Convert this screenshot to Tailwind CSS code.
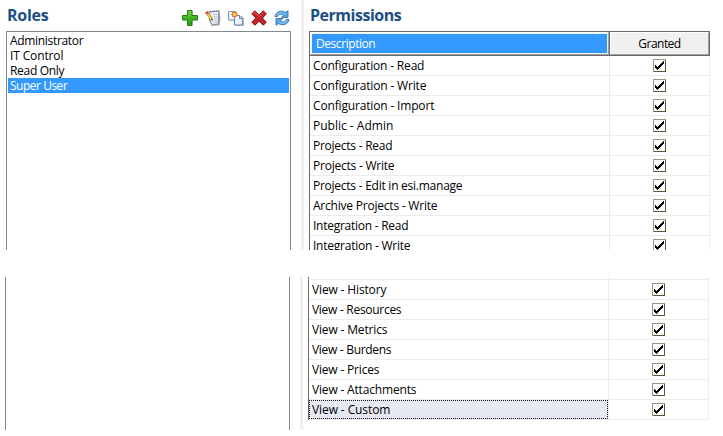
<!DOCTYPE html>
<html lang="en">
<head>
<meta charset="utf-8">
<title>Roles and Permissions</title>
<script src="https://cdn.jsdelivr.net/npm/@tailwindcss/browser@4"></script>
</head>
<body class="w-[723px] h-[436px] overflow-hidden bg-white text-black text-[12px] leading-[15px] font-['Open_Sans','Noto_Sans',sans-serif]">
<svg class="hidden">
  <symbol id="check" viewBox="0 0 13 13">
    <path fill="#fff" d="M0 0h13v13H0z"/>
    <path fill="#949b7c" d="M0 0h13v1H1v12H0z"/>
    <path fill="#555a38" d="M12 1h1v12H1v-1h11z"/>
    <path fill="#000" d="M2 6h1v3h-1zM3 7h1v3h-1zM4 8h1v3h-1zM5 7h1v3h-1zM6 6h1v3h-1zM7 5h1v3h-1zM8 4h1v3h-1zM9 3h1v3h-1zM10 2h1v3h-1z"/>
  </symbol>
</svg>

<section class="flex h-[250px] overflow-hidden">
  <div class="w-[301px] pl-[6px] shrink-0">
    <div class="flex h-[31px] justify-between pr-[11px]">
      <h2 class="pl-px pt-[4px] text-[16px] leading-[22px] font-bold text-[#1b4f83]"><span class="inline-block whitespace-nowrap" data-w="41">Roles</span></h2>
      <div class="flex gap-[7px] pt-[10px]">
        <svg class="size-4" viewBox="0 0 16 16"><defs><linearGradient id="g" x2="0" y2="1"><stop stop-color="#7fd650"/><stop offset=".5" stop-color="#3fb322"/><stop offset="1" stop-color="#249e11"/></linearGradient></defs><path d="M6 1h5v5h4.500v4.500H11v5H6v-5H1V6h5z" fill="#bbb" opacity=".6"/><path d="M5.500.5h4.500v5h5.500v4.500H10v5.500H5.500V10H.5V5.500h5z" fill="url(#g)" stroke="#227d16"/></svg>
        <svg class="size-4" viewBox="0 0 16 16"><path d="m4 2 10.500-.8 1 7-1.200 7.200-7.600.3L4 10z" fill="#777" opacity=".7"/><path d="m4 1.800 10-.8q-1 4.500-.4 8.500l-.2 4.500-6.400 1-2.500-6z" fill="#e9eef6" stroke="#7d8794" stroke-width=".9"/><path d="M8 4.500h4.500M9 6.500h3.500M9 8.500h3.500M9.500 10.500h3M8.500 12.500h4" stroke="#a9b7ca" stroke-width=".7"/><path d="m5 1.600 9-.7" stroke="#66707c" stroke-width="1.400" stroke-dasharray="1 1"/><path d="m2.300 3.200 4.200 6" stroke="#a0701c" stroke-width="3"/><path d="m2.300 3.200 4.200 6" stroke="#ffcf4a" stroke-width="1.800"/><path d="m1.300 1.800 1.200 1.700" stroke="#d0392b" stroke-width="3"/><path d="m5.700 9.500 2 1.500-.1-2.600z" fill="#3b342b"/></svg>
        <svg class="size-4" viewBox="0 0 16 16"><path d="M2 2h7v9H2zM8 6h6l2 2v8H8z" fill="#aaa" opacity=".7"/><path d="M.5 1.500h7v8.500h-7z" fill="#eef4fc" stroke="#7d98bd"/><path d="M6.500 5.500h5l3 3v6.500h-8z" fill="#edf4fd" stroke="#6484b1"/><path d="M11.500 5.500v3h3" fill="#d6e4f5" stroke="#6484b1"/><circle cx="6.500" cy="4.500" r="2.700" fill="#ff8c47"/><path d="m6.500 1 .9 1.500 1.700-.6-.6 1.700 1.500.9-1.500.9.6 1.700-1.700-.6-.9 1.500-.9-1.500-1.700.6.6-1.700L3 4.500l1.500-.9-.6-1.700 1.700.6z" fill="#f0703a"/><circle cx="6.500" cy="4.500" r="1.600" fill="#ffe553"/></svg>
        <svg class="size-4" viewBox="0 0 16 16"><path d="m5 1 4 4 4-4 3 3-4 4.500 4 4-3 3-4-4-4 4-3.500-3 4-4-4-4z" fill="#999" opacity=".5"/><path d="M3.800.8 8 5 12.200.8l3 3L11.300 8l3.900 4.200-3 3L8 11l-4.200 4.200-3-3L4.800 8 .8 3.800z" fill="#c62328" stroke="#861315"/><path d="m2.200 3.500 1.600-1.300L8 6.300l4.200-4" stroke="#e0605c" fill="none"/></svg>
        <svg class="size-4" viewBox="0 0 16 16"><path d="M1 6.500C1.500 2 7.500-.5 11.500 2.500L14 .8v6.700H7.500L9.600 5C7 3.300 4.500 4.200 3.500 6.500z" fill="#5aa9ec" stroke="#2468b0" stroke-width=".8"/><path d="M15 9.500c-.5 4.500-6.500 7-10.500 4L2 15.200V8.500h6.500L6.400 11c2.600 1.700 5.100.8 6.100-1.500z" fill="#5aa9ec" stroke="#2468b0" stroke-width=".8"/><path d="M2.500 5.500Q6 .7 11 3.800M13.500 10.500Q10 15.300 5 12.200" fill="none" stroke="#a5d5fa" stroke-width=".8"/></svg>
      </div>
    </div>
    <ul class="w-[285px] h-[240px] border border-[#828790] p-px">
      <li class="h-[15px] pl-[2px]"><span class="inline-block whitespace-nowrap" data-w="73">Administrator</span></li>
      <li class="h-[15px] pl-[2px]"><span class="inline-block whitespace-nowrap" data-w="53">IT Control</span></li>
      <li class="h-[15px] pl-[2px]"><span class="inline-block whitespace-nowrap" data-w="54">Read Only</span></li>
      <li class="h-[15px] pl-[2px] bg-[#3399ff] text-white"><span class="inline-block whitespace-nowrap" data-w="57">Super User</span></li>
    </ul>
  </div>
  <div class="w-[3px] bg-[#f0f0f0] shrink-0"></div>
  <div class="pl-[5px]">
    <h2 class="h-[31px] pl-px pt-[4px] text-[16px] leading-[22px] font-bold text-[#1b4f83]"><span class="inline-block whitespace-nowrap" data-w="91">Permissions</span></h2>
    <div class="w-[401px]">
      <div class="flex h-[25px] border border-[#696969]">
        <div class="w-[299px] border-l border-t border-white border-r border-b border-r-[#a0a0a0] border-b-[#a0a0a0] bg-[#f0f0f0] p-px"><div class="h-[19px] bg-[#3399ff] text-white pl-[4px] pt-[2px]"><span class="inline-block whitespace-nowrap" data-w="59">Description</span></div></div>
        <div class="w-px bg-[#696969]"></div>
        <div class="w-[99px] border border-white border-r-[#a0a0a0] border-b-[#a0a0a0] bg-[#f0f0f0] text-center pt-[3px]"><span class="inline-block whitespace-nowrap" data-w="42">Granted</span></div>
      </div>
      <div id="top" class="border-l border-[#696969]"></div>
    </div>
  </div>
</section>

<section class="flex h-[153px] mt-[27px] overflow-hidden">
  <div class="w-[300px] pl-[5px] shrink-0"><div class="w-[285px] h-full border-x border-[#828790]"></div></div>
  <div class="w-[3px] bg-[#f0f0f0] shrink-0"></div>
  <div class="pl-[5px]"><div class="w-[401px]">
    <div class="flex h-[3px] border-l border-l-[#696969] border-b border-b-[#ececec]"><div class="w-[300px] border-r border-[#ececec]"></div><div class="w-[100px] border-r border-[#ececec]"></div></div>
    <div id="bottom" class="border-l border-[#696969]"></div>
  </div></div>
</section>

<script>
const row = ([label, width, focus]) => `
  <div class="flex h-5 border-b border-[#ececec]">
    <div class="w-[300px] h-[19px] border-r border-[#ececec]">
      ${focus ? '<div class="relative w-[299px] h-[19px] bg-[#e6e8f2] pl-[3px] pt-[2px]"><svg class="absolute inset-0" width="299" height="19"><path d="M0 .5H299M0 18.500H299M.5 0V19M298.500 0V19" stroke="#111" stroke-dasharray="1 1" fill="none"/></svg>' : '<div class="pl-[3px] pt-[2px]">'}<span class="inline-block whitespace-nowrap" data-w="${width}">${label}</span></div>
    </div>
    <div class="w-[100px] border-r border-[#ececec] pl-[43px] pt-[3px]"><svg class="size-[13px]" shape-rendering="crispEdges"><use href="#check"/></svg></div>
  </div>`;
document.getElementById('top').innerHTML = [
  ['Configuration - Read', 111], ['Configuration - Write', 113], ['Configuration - Import', 121],
  ['Public - Admin', 80], ['Projects - Read', 79], ['Projects - Write', 81],
  ['Projects - Edit in esi.manage', 149], ['Archive Projects - Write', 124],
  ['Integration - Read', 95], ['Integration - Write', 97]
].map(row).join('');
document.getElementById('bottom').innerHTML = [
  ['View - History', 74], ['View - Resources', 89], ['View - Metrics', 75], ['View - Burdens', 79],
  ['View - Prices', 67], ['View - Attachments', 104], ['View - Custom', 78, true]
].map(row).join('');
const fit = s => {
  s.style.letterSpacing = '0px';
  const w = s.getBoundingClientRect().width;
  s.style.letterSpacing = ((+s.dataset.w + .3 - w) / s.textContent.length) + 'px';
};
const labels = [...document.querySelectorAll('[data-w]')];
const observer = new ResizeObserver(entries => entries.forEach(e => fit(e.target)));
labels.forEach(s => observer.observe(s));
addEventListener('load', () => labels.forEach(fit));
document.fonts.ready.then(() => labels.forEach(fit));
</script>
</body>
</html>
